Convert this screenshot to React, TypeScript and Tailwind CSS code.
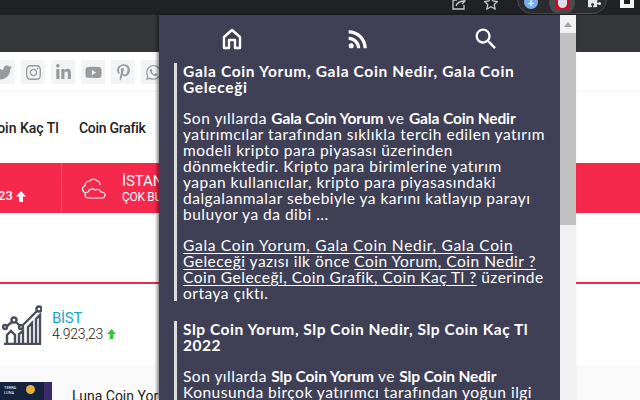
import { FaTwitter, FaInstagram, FaLinkedinIn, FaYoutube, FaPinterestP, FaWhatsapp, FaPuzzlePiece } from "react-icons/fa";
import { MdRssFeed, MdSearch } from "react-icons/md";

const tiles = [FaInstagram, FaLinkedinIn, FaYoutube, FaPinterestP, FaWhatsapp];

function Tile({ children }: { children: React.ReactNode }) {
  return <div className="w-6 h-6 shrink-0 bg-[#f3f4f6] flex items-center justify-center text-[#9a9a9a] text-[17px]">{children}</div>;
}

function U({ children }: { children: React.ReactNode }) {
  return <span className="underline underline-offset-2">{children}</span>;
}

function B({ children }: { children: React.ReactNode }) {
  return <b className="tracking-[-0.13px]">{children}</b>;
}

function Arrow({ className }: { className: string }) {
  return (
    <svg viewBox="0 0 10 11" className={className} fill="currentColor"><path d="M5 0l5 5.500H7V11H3V5.500H0z" /></svg>
  );
}

function Post({ children, title }: { children: React.ReactNode; title: React.ReactNode }) {
  return (
    <div className="border-l-[3px] border-[#dcdcdc] pl-[6px] ml-[15px] mb-[21px]">
      <h2 className="font-bold text-[15.5px] leading-[16px] tracking-[0.66px] m-0 -mt-px">{title}</h2>
      {children}
    </div>
  );
}

export default function App() {
  return (
    <div className="relative w-[640px] h-[400px] overflow-hidden bg-white font-['Lato','Liberation_Sans',sans-serif]">
      <div className="h-[15px] bg-[#202124] flex items-center relative">
        <svg viewBox="0 0 14 14" className="absolute left-[452px] top-[-3px] w-[14px] h-[14px] text-[#c8c8c8]" fill="none" stroke="currentColor" strokeWidth="1.3"><path d="M5 3H1v9h11V8M4 9c1-3 3-5 9-5M10 1l3 3-3 3" /></svg>
        <svg viewBox="0 0 14 14" className="absolute left-[484px] top-[-4px] w-[14px] h-[14px] text-[#c8c8c8]" fill="none" stroke="currentColor" strokeWidth="1.3"><path d="M7 1l2 4 4.500 .6-3.300 3 .9 4.400L7 10.800 2.900 13l.9-4.400L.5 5.600 5 5z" /></svg>
        <div className="absolute left-[517px] top-[-15px] w-[90px] h-[29px] rounded-full border border-[#4a4b4f] bg-[#2b2c30]" />
        <div className="absolute left-[524px] top-[-5px] w-[14px] h-[14px] rounded-full bg-[#7fa9e8] flex items-center justify-center text-white text-[11px] font-bold leading-none">+</div>
        <div className="absolute left-[549px] top-[-8px] w-[26px] h-[22px] rounded-full bg-[#4a4b4f]" />
        <div className="absolute left-[555px] top-[-4px] w-[15px] h-[13px] bg-[#c3121f] flex items-center justify-center"><div className="w-[9px] h-[10px] bg-[#d9dcf2] rounded-b-full" /></div>
        <FaPuzzlePiece className="absolute left-[588px] top-[-5px] text-[#e6e6e6] text-[13px]" />
        <div className="absolute left-[620px] top-[-6px] w-[14px] h-[14px] border-[4px] border-[#f4f4f4] bg-[#222]" />
      </div>
      <div className="h-[37px] bg-[#35363a]" />

      <div className="h-[40px] border-b border-[#f5f5f5] pt-2 flex gap-[6px] -ml-[9px] w-[700px]">
        <Tile><FaTwitter /></Tile>
        {tiles.map((I, i) => <Tile key={i}><I /></Tile>)}
      </div>
      <div className="h-[71px] pt-[27px] flex text-[14px] leading-[18px] font-['Roboto',sans-serif] font-medium text-[#222] -ml-[12px] gap-[20px]">
        <span>Coin Kaç Tl</span><span className="tracking-[-0.25px]">Coin Grafik</span>
      </div>
      <div className="h-[50px] bg-[#f6284c] flex text-white font-['Roboto',sans-serif]">
        <div className="w-[62px] border-r border-[#f8607c] pt-[25px] text-[13px] font-medium leading-[16px] flex items-start">
          <span className="-ml-[2px]">23</span><Arrow className="ml-[3px] mt-[3px] w-[10px] h-[11px]" />
        </div>
        <svg viewBox="0 0 25 21" className="ml-[19px] mt-[15px] w-[25px] h-[21px]" fill="none" stroke="white" strokeWidth="1.200" strokeLinejoin="round">
          <path d="M5 15C1 14 0 9 4 8c0-3 2-5 5-5 1-2 5-3 7 0 2 0 3 2 3 4" />
          <path d="M8 20c-3 0-4-1-4-3s2-3 3-3c1-3 5-4 7-2 2-1 5-1 6 2 3 0 4 2 4 3s-1 3-3 3z" />
        </svg>
        <div className="ml-[16px] pt-[9px] whitespace-nowrap">
          <div className="text-[15px] leading-[18px] tracking-[-0.1px]">İSTANBUL</div>
          <div className="text-[12px] leading-[15px] tracking-[-0.3px]">ÇOK BULUTLU</div>
        </div>
      </div>
      <div className="h-[71px] border-b-2 border-[#f0284a]" />
      <div className="h-[81px] flex items-start pt-[21px]">
        <svg viewBox="0 0 40 40" className="ml-[2px] w-[40px] h-[40px] shrink-0" fill="none" stroke="#4a4d5c" strokeWidth="2.400">
          <circle cx="3" cy="22" r="2" /><circle cx="12" cy="15" r="2.500" /><circle cx="19" cy="22" r="2" /><circle cx="37" cy="4" r="2.500" />
          <path d="M5 21l5-4M14 17l3 3M21 20l14-14M2 39h37M5 39V30l4-4 4 4v9M17 39V29l4-3v13M26 39V22l4-4v21M34 39V14l4-4v29" />
        </svg>
        <div className="ml-[10px] font-['Roboto',sans-serif]">
          <div className="text-[15px] leading-[16px] tracking-[-0.3px] text-[#1ba6cf] pt-[5px]">BİST</div>
          <div className="flex items-center text-[14px] leading-[16px] font-light text-[#222] tracking-[-0.2px]">4.923,23<Arrow className="ml-[4px] text-[#3ac23a] w-[9px] h-[10px]" /></div>
        </div>
      </div>
      <div className="h-[35px] bg-[#fafafa] pt-[17px] flex font-['Roboto',sans-serif]">
        <div className="w-[52px] h-[18px] bg-[#16233f] flex items-start shrink-0">
          <div className="w-[44px] h-[18px] flex justify-between pl-[4px]">
            <div className="text-[4px] leading-[5px] text-white pt-[3px]">TERRA<br />LUNA</div>
            <div className="w-[9px] h-[9px] mt-[3px] mr-[9px] rounded-full bg-[#e3b23c]" />
          </div>
          <div className="w-2 h-[18px] bg-[#3b2a6b]" />
        </div>
        <div className="ml-5 text-[14px] font-normal text-[#222] leading-[18px] pt-[5px] whitespace-nowrap">Luna Coin Yorum</div>
      </div>

      <div className="absolute left-[159px] top-[15px] w-[417px] h-[385px] flex shadow-[-2px_0_3px_rgba(0,0,0,0.45)]">
        <div className="w-[401px] h-full bg-[#3f4056] text-white overflow-hidden">
          <div className="flex items-center h-[47px] pl-[61px] pt-[1px]">
            <svg viewBox="0 0 24 24" className="w-6 h-6" fill="none" stroke="white" strokeWidth="2.400" strokeLinejoin="round"><path d="M4 21V10l8-7 8 7v11h-5v-8H9v8z" /></svg>
            <MdRssFeed className="ml-[100px] w-7 h-7 -mr-[2px]" />
            <MdSearch className="ml-[102px] w-7 h-7" />
          </div>
          <div className="whitespace-nowrap text-[15.500px] leading-[16px] tracking-[0.5px] pt-[2px]">
            <Post title={<>Gala Coin Yorum, Gala Coin Nedir, Gala Coin<br />Geleceği</>}>
              <p className="mt-[15px]">Son yıllarda <B>Gala Coin Yorum</B> ve <B>Gala Coin Nedir</B><br />yatırımcılar tarafından sıklıkla tercih edilen yatırım<br />modeli kripto para piyasası üzerinden<br />dönmektedir. Kripto para birimlerine yatırım<br />yapan kullanıcılar, kripto para piyasasındaki<br />dalgalanmalar sebebiyle ya karını katlayıp parayı<br />buluyor ya da dibi ...</p>
              <p className="mt-[15px]"><span className="tracking-[0.7px]"><U>Gala Coin Yorum, Gala Coin Nedir, Gala Coin</U></span><br /><U>Geleceği</U> yazısı ilk önce <U>Coin Yorum, Coin Nedir ?</U><br /><U>Coin Geleceği, Coin Grafik, Coin Kaç Tl ?</U> üzerinde<br />ortaya çıktı.</p>
            </Post>
            <Post title={<span className="tracking-[0.54px]">Slp Coin Yorum, Slp Coin Nedir, Slp Coin Kaç Tl<br />2022</span>}>
              <p className="mt-[15px]">Son yıllarda <B>Slp Coin Yorum</B> ve <B>Slp Coin Nedir</B><br />Konusunda birçok yatırımcı tarafından yoğun ilgi</p>
            </Post>
          </div>
        </div>
        <div className="w-4 h-full bg-[#f1f1f1] flex flex-col items-center">
          <div className="h-[18px] flex items-center justify-center"><div className="w-0 h-0 border-l-4 border-r-4 border-b-[5px] border-l-transparent border-r-transparent border-b-[#a3a3a3]" /></div>
          <div className="w-full h-[192px] bg-[#c1c1c1]" />
        </div>
      </div>
    </div>
  );
}
